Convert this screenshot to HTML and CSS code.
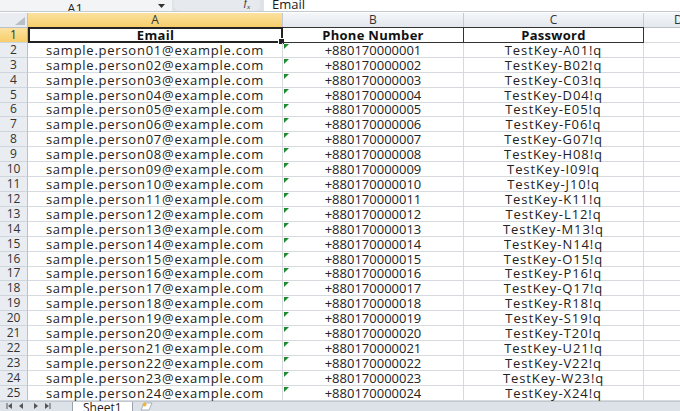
FILE: index.html
```html
<!DOCTYPE html>
<html>
<head>
<meta charset="utf-8">
<link rel="stylesheet" href="styles.css">
</head>
<body>
<div class="app">
  <div class="fbar">
    <div class="namebox"><span>A1</span></div>
    <div class="nb-arrow"><svg width="7" height="4" viewBox="0 0 7 4"><path d="M0 0h7L3.5 4z" fill="#333"/></svg></div>
    <div class="fbtns"><span class="fx">f<sub>x</sub></span></div>
    <div class="finput">Email</div>
  </div>
  <div class="sheet" id="sheet">
    <div class="corner"><svg width="10" height="8" viewBox="0 0 10 8"><path d="M10 0V8H0z" fill="#b9bfc7"/></svg></div>
    <div class="colh sel">A</div>
    <div class="colh">B</div>
    <div class="colh">C</div>
    <div class="colh last">D</div>
  </div>
  <div class="tabs">
    <div class="nav">
      <svg width="52" height="8" viewBox="0 0 52 8">
        <path d="M3 1v6" stroke="#555" stroke-width="1"/><path d="M8 1v6L4 4z" fill="#555"/>
        <path d="M19 1v6L15 4z" fill="#555"/>
        <path d="M30 1v6L34 4z" fill="#555"/>
        <path d="M41 1v6L45 4z" fill="#555"/><path d="M46 1v6" stroke="#555" stroke-width="1"/>
      </svg>
    </div>
    <div class="tab">Sheet1</div>
    <div class="newtab"><svg width="14" height="9" viewBox="0 0 14 9"><path d="M2 8L5 1h8l-3 7z" fill="#fff" stroke="#9aa3ae" stroke-width="0.8"/><circle cx="5.5" cy="2.5" r="2" fill="#f2b53c"/></svg></div>
  </div>
</div>
<script src="app.js"></script>
</body>
</html>
```

FILE: app.js
```js
(function(){
  var s = document.getElementById('sheet');
  var letters = 'ABCDEFGHIJKLMNOPQRSTUVWX';
  function cell(cls, txt){
    var d = document.createElement('div');
    d.className = cls;
    var sp = document.createElement('span');
    sp.textContent = txt;
    d.appendChild(sp);
    s.appendChild(d);
    return d;
  }
  cell('rowh sel', '1');
  cell('c hdr a1', 'Email');
  cell('c hdr', 'Phone Number');
  cell('c hdr', 'Password');
  cell('c empty hdr-d', '');
  for (var i = 1; i <= 24; i++) {
    var n = (i < 10 ? '0' : '') + i;
    cell('rowh', String(i + 1));
    cell('c email', 'sample.person' + n + '@example.com');
    cell('c phone tri', '+8801700000' + n);
    cell('c pass', 'TestKey-' + letters[i - 1] + n + '!q');
    cell('c empty', '');
  }
})();
```

FILE: styles.css
```css
html, body {
  margin: 0;
  padding: 0;
  background: #fff;
}
.app {
  width: 680px;
  height: 411px;
  overflow: hidden;
  display: flex;
  flex-direction: column;
  font-family: "Open Sans", "DejaVu Sans", sans-serif;
  color: #1a1a1a;
}
.fbar {
  height: 11px;
  display: flex;
  align-items: stretch;
  background: #dfe3e8;
  border-bottom: 1px solid #c5cad1;
  flex: none;
}
.namebox {
  width: 150px;
  background: #f3f4f6;
  display: flex;
  justify-content: center;
  align-items: flex-end;
  font-size: 13px;
  line-height: 13px;
  overflow: hidden;
  color: #222;
}
.namebox span {
  margin-bottom: -4px;
}
.nb-arrow {
  width: 22px;
  display: flex;
  align-items: center;
  justify-content: center;
  background: #f3f4f6;
}
.fbtns {
  width: 86px;
  margin-left: 2px;
  background: #e6e9ed;
  border-radius: 0 0 6px 6px;
  display: flex;
  justify-content: flex-end;
  align-items: flex-end;
  padding-right: 10px;
  box-sizing: border-box;
  overflow: hidden;
}
.fx {
  font-family: "Liberation Serif", serif;
  font-style: italic;
  font-size: 11px;
  line-height: 11px;
  color: #333;
  margin-bottom: -2px;
}
.fx sub {
  font-size: 7px;
}
.finput {
  flex: 1;
  margin-left: 4px;
  background: #fff;
  font-size: 13px;
  line-height: 13px;
  padding-left: 8px;
  display: flex;
  align-items: flex-end;
  overflow: hidden;
}
.sheet {
  flex: none;
  display: grid;
  grid-template-columns: 28px 255px 181px 180px 1fr;
  grid-template-rows: 15px repeat(25, 14.92px);
  margin-top: 1px;
  font-size: 13px;
}
.corner {
  background: #e9edf2;
  border-right: 1px solid #b9c0c9;
  border-bottom: 1px solid #b9c0c9;
  display: flex;
  align-items: flex-end;
  justify-content: flex-end;
  padding: 0 2px 2px 0;
}
.colh {
  background: linear-gradient(#f4f6f9, #e3e8ee);
  border-right: 1px solid #c4cad2;
  border-bottom: 1px solid #b9c0c9;
  display: flex;
  align-items: center;
  justify-content: center;
  color: #333;
  font-size: 12px;
  line-height: 12px;
}
.colh.sel {
  background: linear-gradient(#fbe29f, #f6cd6b);
  border-bottom: 1px solid #e2a844;
}
.colh.last {
  border-right: none;
  justify-content: flex-start;
  padding-left: 30px;
}
.rowh {
  background: #e9edf2;
  border-right: 1px solid #b9c0c9;
  border-bottom: 1px solid #cfd5dc;
  display: flex;
  align-items: center;
  justify-content: center;
  color: #333;
  font-size: 12px;
  line-height: 12px;
}
.rowh.sel {
  background: linear-gradient(#fbe29f, #f6cd6b);
  border-right: 1px solid #e2a844;
}
.c {
  position: relative;
  border-right: 1px solid #d6d9dd;
  border-bottom: 1px solid #d6d9dd;
  display: flex;
  align-items: center;
  justify-content: center;
  white-space: nowrap;
  overflow: visible;
  line-height: 12px;
  color: #222;
}
.c span {
  display: block;
  line-height: 12px;
}
.c.email span {
  letter-spacing: 0.75px;
}
.c.pass span {
  letter-spacing: 0.9px;
}
.c.phone span {
  letter-spacing: 0;
}
.c.hdr {
  font-weight: bold;
  border-top: 1px solid #333;
  border-bottom: 1px solid #333;
  border-right: 1px solid #333;
  margin-top: -1px;
  color: #111;
}
.c.hdr span {
  letter-spacing: 0.3px;
}
.c.a1 {
  border: 2px solid #222;
}
.c.a1::after {
  content: "";
  position: absolute;
  right: -4px;
  bottom: -4px;
  width: 5px;
  height: 5px;
  background: #222;
  border: 1px solid #fff;
}
.c.hdr-d {
  border-bottom: 1px solid #d6d9dd;
}
.c.tri::before {
  content: "";
  position: absolute;
  left: 1px;
  top: 1px;
  border-top: 5px solid #1e8c2e;
  border-right: 5px solid transparent;
}
.c.empty {
  border-right: none;
}
.tabs {
  flex: 1;
  display: flex;
  align-items: flex-end;
  background: #dde2e8;
  border-top: 1px solid #c2c8d0;
  overflow: hidden;
}
.nav {
  width: 58px;
  padding-left: 4px;
  display: flex;
  align-items: center;
  height: 100%;
}
.tab {
  margin-left: 10px;
  padding: 0 10px;
  height: 9px;
  background: #fff;
  font-size: 12px;
  line-height: 12px;
  color: #222;
  overflow: hidden;
  border-left: 1px solid #9aa3ae;
  border-right: 1px solid #9aa3ae;
}
.newtab {
  margin-left: 6px;
  display: flex;
  align-items: flex-end;
}
```
